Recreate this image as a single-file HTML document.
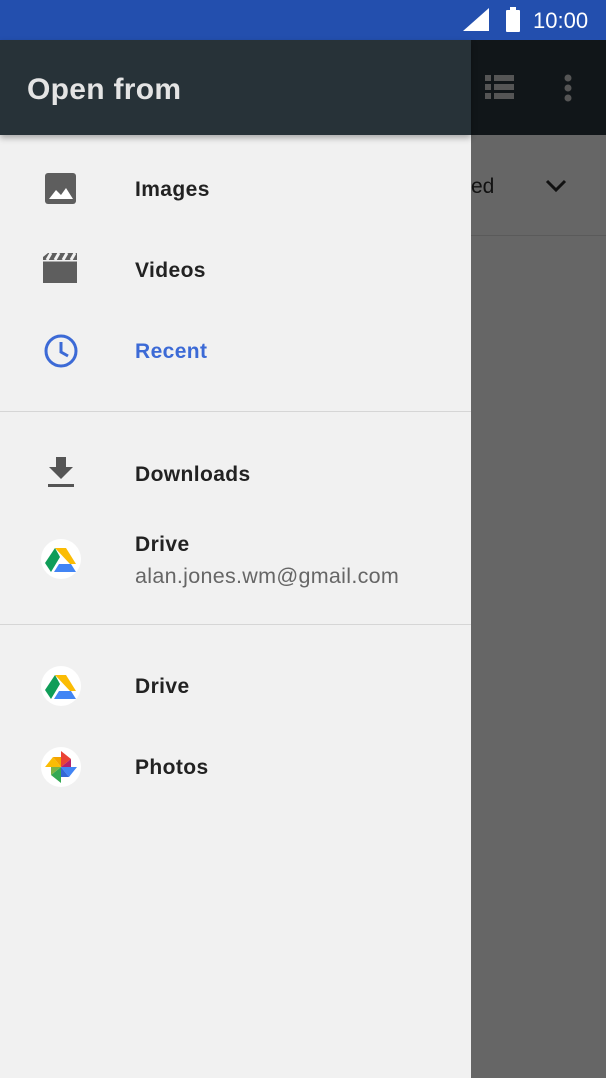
<!DOCTYPE html>
<html><head><meta charset="utf-8"><style>
body{margin:0;width:606px;height:1078px;position:relative;overflow:hidden;font-family:"Liberation Sans",Roboto,sans-serif;background:#666}
.sb{position:absolute;left:0;top:0;width:606px;height:40px;background:#234fae}
.rh{position:absolute;left:471px;top:40px;width:135px;height:95px;background:#111619}
.dr{position:absolute;left:0;top:40px;width:471px;height:1038px;background:#f1f1f1}
.hd{position:absolute;left:0;top:0;width:471px;height:95px;background:#273238;box-shadow:0 3px 6px rgba(0,0,0,.3)}
.hd span{position:absolute;left:27px;top:33px;font-size:30px;color:#e4e4e4;font-weight:bold;letter-spacing:0.3px}
.t{position:absolute;left:135px;font-size:21px;color:#222;font-weight:bold;letter-spacing:0.4px}
.ic{position:absolute}
.div{position:absolute;left:0;width:471px;height:1px;background:#d6d6d6}
.circ{position:absolute;width:40px;height:40px;border-radius:50%;background:#fff}
</style></head><body>
<div class="sb">
<svg style="position:absolute;left:463px;top:8px" width="28" height="24"><polygon points="0,23 26,0 26,23" fill="#fff"/></svg>
<div style="position:absolute;left:506px;top:10px;width:14px;height:22px;background:#fff;border-radius:1px"></div>
<div style="position:absolute;left:510px;top:7px;width:6px;height:4px;background:#fff"></div>
<span style="position:absolute;left:533px;top:8px;font-size:22px;color:#fff">10:00</span>
</div>
<div class="rh">
<svg style="position:absolute;left:14px;top:35px" width="30" height="26" fill="#555"><rect x="0" y="0" width="6" height="6"/><rect x="9" y="0" width="20" height="6"/><rect x="0" y="9" width="6" height="6"/><rect x="9" y="9" width="20" height="6"/><rect x="0" y="18" width="6" height="6"/><rect x="9" y="18" width="20" height="6"/></svg>
<svg style="position:absolute;left:92px;top:34px" width="10" height="30" fill="#555"><circle cx="5" cy="4" r="3.5"/><circle cx="5" cy="14" r="3.5"/><circle cx="5" cy="24" r="3.5"/></svg>
</div>
<span style="position:absolute;left:471px;top:175px;font-size:21px;color:#111">ed</span>
<svg style="position:absolute;left:544px;top:178px" width="24" height="16"><path d="M3 3 L12 12 L21 3" stroke="#111" stroke-width="3" fill="none"/></svg>
<div style="position:absolute;left:471px;top:235px;width:135px;height:1px;background:#5a5a5a"></div>
<div class="dr">
<div class="hd"><span>Open from</span></div>
<svg class="ic" style="left:45px;top:133px" width="32" height="32"><rect x="0" y="0" width="31" height="31" rx="3" fill="#5e5e5e"/><path d="M4 26 L11 17 L16 22 L21 15 L28 26Z" fill="#fff"/></svg>
<div class="t" style="top:138px">Images</div>
<svg class="ic" style="left:43px;top:213px" width="36" height="32"><path d="M0 4 L5 0 L34 0 L34 30 L0 30Z" fill="#5e5e5e"/><path d="M8 0 L4 7 M16 0 L12 7 M24 0 L20 7 M32 0 L28 7" stroke="#f1f1f1" stroke-width="3"/><rect x="0" y="7" width="34" height="1.5" fill="#f1f1f1"/></svg>
<div class="t" style="top:219px">Videos</div>
<svg class="ic" style="left:43px;top:293px" width="36" height="36"><circle cx="18" cy="18" r="15" stroke="#3c6ad6" stroke-width="3" fill="none"/><path d="M18 9 V19 L25 23" stroke="#3c6ad6" stroke-width="3" fill="none"/></svg>
<div class="t" style="top:300px;color:#3c6ad6">Recent</div>
<div class="div" style="top:371px"></div>
<svg class="ic" style="left:48px;top:417px" width="26" height="32"><path d="M8 0 H18 V10 H25 L13 22 L1 10 H8Z" fill="#555"/><rect x="0" y="27" width="26" height="3" fill="#555"/></svg>
<div class="t" style="top:423px">Downloads</div>
<div class="circ" style="left:41px;top:499px"></div>
<svg class="ic" style="left:45px;top:508px" width="32" height="24"><polygon points="10,0 21,0 31,16 25,16" fill="#fbbc04"/><polygon points="10,0 15,9 6,24 0,15" fill="#0f9d58"/><polygon points="9,24 31,24 26,16 14,16" fill="#4285f4"/></svg>
<div class="t" style="top:493px">Drive</div>
<div style="position:absolute;left:135px;top:524px;font-size:21.5px;color:#666;letter-spacing:0.3px">alan.jones.wm@gmail.com</div>
<div class="div" style="top:584px"></div>
<div class="circ" style="left:41px;top:626px"></div>
<svg class="ic" style="left:45px;top:635px" width="32" height="24"><polygon points="10,0 21,0 31,16 25,16" fill="#fbbc04"/><polygon points="10,0 15,9 6,24 0,15" fill="#0f9d58"/><polygon points="9,24 31,24 26,16 14,16" fill="#4285f4"/></svg>
<div class="t" style="top:635px">Drive</div>
<div class="circ" style="left:41px;top:707px"></div>
<svg class="ic" style="left:43px;top:709px" width="36" height="36"><path d="M18 18 L18 2 L28 10Z" fill="#ea4335"/><path d="M18 18 L34 18 L26 28Z" fill="#4285f4"/><path d="M18 18 L18 34 L8 26Z" fill="#34a853"/><path d="M18 18 L2 18 L10 8Z" fill="#fbbc04"/><path d="M18 18 L28 10 L28 18Z" fill="#b3226e"/><path d="M18 18 L26 28 L18 28Z" fill="#3367d6"/><path d="M18 18 L8 26 L8 18Z" fill="#7cb342"/><path d="M18 18 L10 8 L18 8Z" fill="#f4a400"/></svg>
<div class="t" style="top:716px">Photos</div>
</div>
</body></html>
